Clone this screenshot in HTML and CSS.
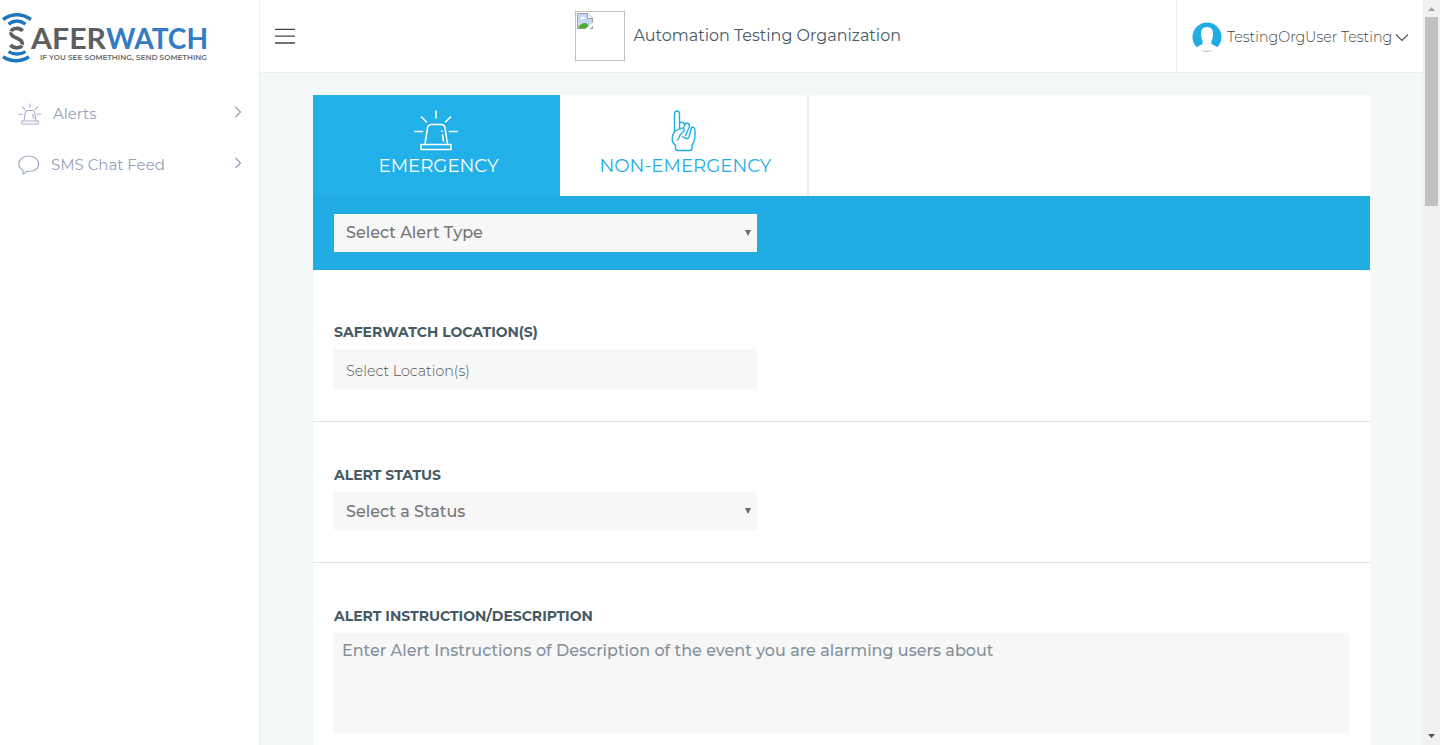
FILE: index.html
```html
<!DOCTYPE html>
<html lang="en">
<head>
<meta charset="utf-8">
<title>SaferWatch</title>
<link rel="stylesheet" href="styles.css">
</head>
<body>
<div class="app">
  <aside class="sidebar">
    <svg class="logo" width="210" height="66" viewBox="0 0 210 66">
      <g fill="none" stroke="#1f77c0" stroke-width="3.400">
        <path d="M3 19.500Q17 10 31 19.500"/>
        <path d="M8.500 24.200Q17 18 25.500 24.200"/>
        <path d="M8.500 51.600Q17 56.500 25.500 51.600"/>
        <path d="M3 56.800Q16 65 29 56.800"/>
      </g>
      <path d="M22.500 31C20.500 27.500 11 27 11 33C11 38.500 22.200 37.500 22.200 43.200C22.200 49.300 13.500 48.500 10.500 45" fill="none" stroke="#5c5e60" stroke-width="3.600"/>
      <path d="M8.500 31l5 1.500M20 44.500l5 1.500" stroke="#fff" stroke-width=".9"/>
      <text class="logo-name logo-gray" x="31" y="49" textLength="75" lengthAdjust="spacingAndGlyphs">AFER</text>
      <text class="logo-name logo-blue" x="106" y="49" textLength="102" lengthAdjust="spacingAndGlyphs">WATCH</text>
      <text class="logo-tag" x="40" y="59.700" textLength="167" lengthAdjust="spacingAndGlyphs">IF YOU SEE SOMETHING, SEND SOMETHING</text>
    </svg>
    <nav class="menu">
      <a class="menu-item">
        <svg class="menu-icon" width="24" height="22" viewBox="0 0 44 42" fill="none" stroke="#a3aec4" stroke-width="2"><path d="M10.500 34L13 18Q13.500 14.500 17 14.500H27Q30.500 14.500 31 18L33.500 34M6.500 34.500H37.500V40H6.500ZM0 21.500H8.500M35 21.500H43.500M22 1V9M7 7L12.500 12.500M37 7L31.500 12.500M27 21L29 31"/></svg>
        <span class="menu-text">Alerts</span>
        <svg class="chev" width="8" height="12" viewBox="0 0 8 12"><path d="M1.500 1L6.500 6L1.500 11"/></svg>
      </a>
      <a class="menu-item">
        <svg class="menu-icon" width="22" height="20" viewBox="0 0 22 20" fill="none" stroke="#a3aec4" stroke-width="1.200"><path d="M4.800 15.200C2.300 13.800.8 11.500.8 9C.8 4.400 5.100 1 10.700 1S20.600 4.400 20.600 9S16.300 16.500 10.700 16.500L9 16.400Q7.500 18.300 5 18.800Q5.300 17 4.800 15.200Z"/></svg>
        <span class="menu-text">SMS Chat Feed</span>
        <svg class="chev" width="8" height="12" viewBox="0 0 8 12"><path d="M1.500 1L6.500 6L1.500 11"/></svg>
      </a>
    </nav>
  </aside>
  <div class="page">
    <header class="topbar">
      <svg class="burger" width="20" height="16" viewBox="0 0 20 16"><path d="M0.500 1.300H19.500M0.500 8.200H19.500M0.500 15H19.500" stroke="#444" stroke-width="1.300" stroke-linecap="round"/></svg>
      <div class="org">
        <div class="org-image">
          <svg width="16" height="16" viewBox="0 0 16 16"><path d="M.5.500H11L15.500 5V15.500H.5Z" fill="#c4d8f5" stroke="#a0a0a0"/><path d="M10.500.500V5.500H15.500" fill="#fff" stroke="#a0a0a0"/><path d="M3 6Q3 4.500 4.500 4.500Q6 2.500 7.500 4.500Q9 4.500 9 6Z" fill="#fff"/><path d="M1 15.500Q3 10 8 10Q11 10 12.500 15.500Z" fill="#55ab2d"/><path d="M7.500 16.500L16.500 9V12L12 16.500Z" fill="#fff"/></svg>
        </div>
        <span class="org-name">Automation Testing Organization</span>
      </div>
      <div class="user">
        <svg class="avatar" width="30" height="31" viewBox="0 0 30 31"><clipPath id="face"><circle cx="15" cy="15" r="14.500"/></clipPath><g clip-path="url(#face)"><path d="M0 0H30V25.500H0Z" fill="#21ade3"/><path d="M4 31V25.500L10.500 22V18.500Q9 17 9 11Q9 5 15 5T21 11Q21 17 19.500 18.500V22L26 25.500V31Z" fill="#fff"/></g><path d="M8 28.700H22Q15 31 8 28.700Z" fill="#bbb"/></svg>
        <span class="user-name">TestingOrgUser Testing</span>
        <svg width="14" height="9" viewBox="0 0 14 9"><path d="M1 1.500L7 7.500L13 1.500" fill="none" stroke="#555" stroke-width="1.200"/></svg>
      </div>
    </header>
    <main class="content">
      <section class="card">
        <div class="tabs">
          <div class="tab tab-active">
            <svg width="44" height="42" viewBox="0 0 44 42" fill="none" stroke="#fff" stroke-width="1.600" stroke-linecap="round" stroke-linejoin="round"><path d="M11 34L13.500 18Q14 14.500 17.500 14.500H27Q30.500 14.500 31 18L33.500 34M7 34.500H37V39.500H7ZM1 21.500H8.500M35.500 21.500H43M22 1V8M7.500 7L12.500 12M36.500 7L31.500 12M28 21V21.500M28.500 25L29.500 31"/></svg>
            <span class="tab-text">EMERGENCY</span>
          </div>
          <div class="tab tab-other">
            <svg width="26" height="42" viewBox="0 0 26 42" fill="none" stroke="#21ade3" stroke-width="1.400" stroke-linecap="round" stroke-linejoin="round"><path d="M3.500 21.500V4Q3.500 1 6 1T8.500 4V19M3.500 21.500Q1.200 25 1.200 29Q1.200 33 4.500 35.500V38Q4.500 40.500 7 40.500H18.500Q21 40.500 21 38V35.500Q24 31 24 26V20Q23.500 16.500 20.500 17.500L18 27Q17 29.500 14 28L11.500 26.500M3.500 21.500L9 18.500Q12.500 17.500 13.500 19.500Q13.500 21 11.500 22.500L9 25Q8.500 28 6.500 30M14.500 25.500L18.500 16.500Q18.500 13 16 13Q14.500 13 13.800 15L12.500 18M13.800 15Q12.500 11.500 8.800 12.500"/></svg>
            <span class="tab-text">NON-EMERGENCY</span>
          </div>
        </div>
        <div class="type-bar">
          <div class="field select select-type"><span>Select Alert Type</span><i class="arrow"></i></div>
        </div>
        <div class="group group-location">
          <label class="label">SAFERWATCH LOCATION(S)</label>
          <div class="field location"><span>Select Location(s)</span></div>
        </div>
        <div class="group group-status">
          <label class="label">ALERT STATUS</label>
          <div class="field select"><span>Select a Status</span><i class="arrow"></i></div>
        </div>
        <div class="group group-desc">
          <label class="label">ALERT INSTRUCTION/DESCRIPTION</label>
          <div class="area"><span>Enter Alert Instructions of Description of the event you are alarming users about</span></div>
        </div>
      </section>
    </main>
  </div>
  <div class="scrollbar">
    <svg width="17" height="17" viewBox="0 0 17 17"><path d="M5 11L8.500 7L12 11Z" fill="#a3a3a3"/></svg>
    <div class="thumb"></div>
    <svg class="down" width="17" height="17" viewBox="0 0 17 17"><path d="M5 6H12L8.500 10Z" fill="#505050"/></svg>
  </div>
</div>
</body>
</html>
```
FILE: styles.css
```css
* { box-sizing: border-box; }
body { margin: 0; overflow: hidden; font-family: Montserrat, Inter, sans-serif; background: #f4f8f9; }
svg { display: block; flex: none; }
span, label { white-space: nowrap; }
.app { display: flex; width: 1440px; height: 745px; overflow: hidden; }
.sidebar { width: 260px; flex: none; background: #fff; border-right: 1px solid #e9eeef; }
.logo-name { font-family: Lato, sans-serif; font-weight: 700; font-size: 29px; }
.logo-gray { fill: #5c5e60; }
.logo-blue { fill: #347bc2; }
.logo-tag { font-family: Montserrat, Lato, sans-serif; font-weight: 600; font-size: 7.4px; fill: #66686a; }
.menu { padding-top: 22px; }
.menu-item { display: flex; align-items: center; height: 51px; padding: 0 17.5px 0 18px; color: #939fb8; font-size: 15px; font-weight: 400; }
.menu-text { margin-left: 11px; }
.chev { margin: -3px 0 0 auto; fill: none; stroke: #8c98b2; stroke-width: 1.1; }
.page { flex: 1; min-width: 0; }
.topbar { display: flex; align-items: center; height: 73px; background: #fff; border-bottom: 1px solid #e9eeef; }
.burger { margin-left: 15px; }
.org { display: flex; align-items: center; margin-left: 280px; color: #455a64; font-size: 16px; }
.org-image { width: 50px; height: 50px; border: 1px solid #c0c0c0; padding: 1px; margin-right: 8.5px; }
.org-name { margin-top: -2px; }
.user { display: flex; align-items: center; align-self: stretch; width: 247px; margin-left: auto; padding: 3px 0 0 15px; border-left: 1px solid #e9eeef; color: #444; font-size: 14.25px; font-weight: 300; }
.user-name { margin: -1px 3px 0 5px; width: 165px; }
.content { padding: 22px 53px 0; }
.card { height: 660px; background: #fff; }
.tabs { display: flex; height: 101px; }
.tab { display: flex; flex-direction: column; align-items: center; padding-top: 15px; font-size: 18.2px; line-height: 24px; }
.tab svg { margin: 0 5px 2px 0; }
.tab-active { width: 247px; padding-left: 4px; background: #22b0e9; color: #fff; }
.tab-other { width: 249px; padding-left: 4px; border-right: 2px solid #ececec; color: #21ade3; }
.tab-other svg { margin-right: 3px; }
.type-bar { height: 74px; padding: 18px 21px; background: #21ade3; }
.field { display: flex; align-items: center; width: 423px; height: 38px; padding: 0 5px 0 12px; background: #f7f7f7; color: #757575; }
.select { font-size: 16px; font-weight: 500; justify-content: space-between; }
.select-type span { margin-top: -2px; }
.arrow { width: 6px; height: 6px; background: #696969; clip-path: polygon(0 0, 100% 0, 50% 100%); margin-right: 1px; }
.location { height: 40px; padding-top: 4px; font-size: 14.25px; font-weight: 300; color: #505050; }
.group { padding: 0 21px; border-bottom: 1px solid #e4e4e4; }
.label { display: block; height: 26px; line-height: 18px; font-size: 14px; font-weight: 700; color: #455a64; }
.group-location { height: 152px; padding-top: 53px; }
.group-status { height: 141px; padding-top: 44px; }
.group-desc { padding-top: 44px; border-bottom: 0; }
.area { height: 100px; padding: 8px; background: #f7f7f7; color: #85909a; font-size: 16px; line-height: 20px; font-weight: 500; }
.scrollbar { display: flex; flex-direction: column; width: 17px; flex: none; background: #f1f1f1; }
.thumb { width: 13px; height: 189px; margin-left: 2px; background: #c1c1c1; }
.down { margin-top: auto; }
```
